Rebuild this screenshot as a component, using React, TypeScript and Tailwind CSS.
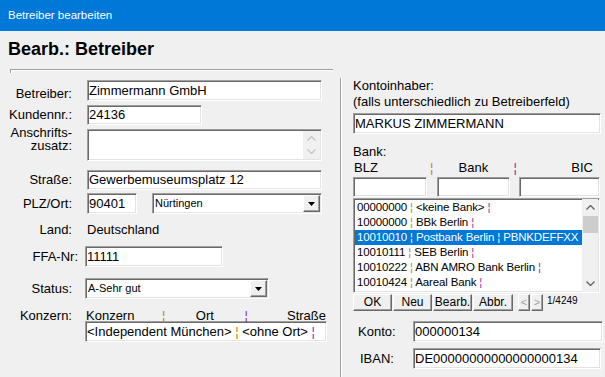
import React from 'react';

// Win32-style edit controls
const sunken =
  'bg-white border border-t-[#a0a0a0] border-l-[#a0a0a0] border-r-white border-b-white shadow-[inset_1px_1px_0_#696969,inset_-1px_-1px_0_#e3e3e3]';
const raised =
  'bg-[#f0f0f0] border border-t-white border-l-white border-r-[#696969] border-b-[#696969] shadow-[inset_-1px_-1px_0_#a0a0a0]';

const Gold = () => <span className="text-[#b58a00]">¦</span>;
const Purple = () => <span className="text-[#8b2f9a]">¦</span>;

const Chevron = ({ up, color }: { up?: boolean; color: string }) => (
  <svg width="9" height="5" viewBox="0 0 9 5">
    <path
      d={up ? 'M0.5 4.5 L4.5 0.5 L8.5 4.5' : 'M0.5 0.5 L4.5 4.5 L8.5 0.5'}
      fill="none"
      stroke={color}
      strokeWidth="1.3"
    />
  </svg>
);

const Field: React.FC<{ className?: string; children?: React.ReactNode }> = ({ className = '', children }) => (
  <div className={`${sunken} flex items-center pl-[1px] whitespace-pre overflow-hidden ${className}`}>
    <span>{children}</span>
  </div>
);

const Combo: React.FC<{ className?: string; value: string }> = ({ className = '', value }) => (
  <div className={`${sunken} flex p-[1px] ${className}`}>
    <div className="flex-1 flex items-center text-[11px] pl-[1px]">{value}</div>
    <div className={`${raised} w-[17px] flex items-center justify-center`}>
      <svg width="7" height="4" viewBox="0 0 7 4">
        <path d="M0 0h7L3.5 4z" fill="#000" />
      </svg>
    </div>
  </div>
);

const Label: React.FC<{ w?: string; className?: string; children: React.ReactNode }> = ({
  w = 'w-[72px]',
  className = '',
  children,
}) => <div className={`${w} shrink-0 text-right ${className}`}>{children}</div>;

const banks: [string, string, string][] = [
  ['00000000', '<keine Bank>', ''],
  ['10000000', 'BBk Berlin', ''],
  ['10010010', 'Postbank Berlin', 'PBNKDEFFXX'],
  ['10010111', 'SEB Berlin', ''],
  ['10010222', 'ABN AMRO Bank Berlin', ''],
  ['10010424', 'Aareal Bank', ''],
  ['10020000', 'Berliner Bank', ''],
];

const App: React.FC = () => {
  return (
    <div className="w-[605px] h-[377px] overflow-hidden bg-[#f0f0f0] font-['Liberation_Sans',Arial,sans-serif] text-[13px] text-black">
      <div className="h-[31px] bg-[#0078d7] flex items-center pl-[8px] text-[11.5px] text-white">
        Betreiber bearbeiten
      </div>
      <h1 className="pl-[8px] pt-[7px] pb-[9px] text-[18px] leading-[22px] font-bold">Bearb.: Betreiber</h1>

      <div className="flex">
        {/* left side */}
        <div className="w-[340px] shrink-0">
          <div className="ml-[10px] mr-[7px] h-[4px] border-t border-l border-[#a0a0a0] shadow-[inset_1px_1px_0_white]" />

          <div className="flex items-center mt-[7px] h-[21px]">
            <Label className="pt-[6px]">Betreiber:</Label>
            <Field className="ml-[15px] w-[235px] h-[21px]">Zimmermann GmbH</Field>
          </div>

          <div className="flex items-center mt-[4px] h-[20px]">
            <Label>Kundennr.:</Label>
            <Field className="ml-[15px] w-[115px] h-[20px]">24136</Field>
          </div>

          <div className="flex items-start">
            <Label className="leading-[13px] pt-[1px]">
              Anschrifts-
              <br />
              zusatz:
            </Label>
            <div className={`${sunken} ml-[15px] mt-[4px] w-[235px] h-[32px] flex justify-end p-[1px]`}>
              <div className="w-[17px] bg-[#f0f0f0] flex flex-col items-center justify-between py-[5px]">
                <Chevron up color="#c4c4c4" />
                <Chevron color="#c4c4c4" />
              </div>
            </div>
          </div>

          <div className="flex items-center mt-[9px] h-[20px]">
            <Label>Straße:</Label>
            <Field className="ml-[15px] w-[235px] h-[20px]">Gewerbemuseumsplatz 12</Field>
          </div>

          <div className="flex items-center mt-[3px] h-[21px]">
            <Label>PLZ/Ort:</Label>
            <Field className="ml-[15px] w-[50px] h-[21px]">90401</Field>
            <Combo className="ml-[15px] w-[170px] h-[21px]" value="Nürtingen" />
          </div>

          <div className="flex items-center mt-[6px] h-[20px]">
            <Label>Land:</Label>
            <div className="ml-[15px]">Deutschland</div>
          </div>

          <div className="flex items-center mt-[6px] h-[21px]">
            <Label w="w-[78px]">FFA-Nr:</Label>
            <Field className="ml-[7px] w-[138px] h-[21px]">11111</Field>
          </div>

          <div className="flex items-center mt-[11px] h-[21px]">
            <Label>Status:</Label>
            <Combo className="ml-[13px] w-[184px] h-[21px]" value="A-Sehr gut" />
          </div>

          <div className="flex items-start mt-[8px]">
            <Label className="leading-[14px] pt-[2px]">Konzern:</Label>
            <div className="ml-[13px] w-[242px]">
              <div className="flex h-[14px] leading-[14px] pt-[2px] box-content">
                <span className="w-[77px] pl-[1px]">Konzern</span>
                <Gold />
                <span className="w-[79px] text-center">Ort</span>
                <Purple />
                <span className="flex-1 text-right pr-[1px]">Straße</span>
              </div>
              <Field className="h-[21px] w-[242px] -mt-[2px]">
                {'<Independent München> '}
                <Gold />
                {' <ohne Ort> '}
                <Purple />
              </Field>
            </div>
          </div>
        </div>

        {/* right side */}
        <div className="mt-[9px] h-[299px] flex-1 border-l border-[#a0a0a0] shadow-[inset_1px_0_0_white] pl-[12px]">
          <div className="leading-[16px]">
            <div>Kontoinhaber:</div>
            <div>(falls unterschiedlich zu Betreiberfeld)</div>
          </div>
          <Field className="mt-[3px] w-[248px] h-[21px]">MARKUS ZIMMERMANN</Field>

          <div className="mt-[10px] leading-[16px]">Bank:</div>
          <div className="flex w-[247px] h-[16px] leading-[16px]">
            <span className="w-[77px] pl-[1px]">BLZ</span>
            <Gold />
            <span className="w-[80px] text-center">Bank</span>
            <Purple />
            <span className="flex-1 text-right pr-[7px]">BIC</span>
          </div>
          <div className="flex mt-[1px] h-[20px]">
            <Field className="w-[74px] h-[20px]" />
            <Field className="ml-[10px] w-[73px] h-[20px]" />
            <Field className="ml-[9px] w-[81px] h-[20px]" />
          </div>

          <div className={`${sunken} mt-[1px] w-[247px] h-[95px] flex overflow-hidden`}>
            <div className="flex-1 pt-[1px] pl-[1px] text-[11.5px] tracking-[-0.15px] leading-[15px] whitespace-nowrap overflow-hidden">
              {banks.map(([blz, name, bic]) => {
                const selected = blz === '10010010';
                return (
                  <div
                    key={blz}
                    className={`h-[15px] pl-[2px] ${selected ? 'bg-[#0078d7] text-white' : 'text-black'}`}
                  >
                    {blz} {selected ? '¦' : <Gold />} {name} {selected ? '¦' : <Purple />}
                    {bic && ` ${bic}`}
                  </div>
                );
              })}
            </div>
            <div className="w-[16px] mr-[1px] bg-[#f0f0f0] flex flex-col items-center">
              <div className="h-[17px] flex items-center">
                <Chevron up color="#606060" />
              </div>
              <div className="w-[15px] h-[17px] bg-[#cdcdcd]" />
              <div className="flex-1" />
              <div className="h-[17px] flex items-center">
                <Chevron color="#606060" />
              </div>
            </div>
          </div>

          <div className="flex items-start gap-[1px] mt-[1px] h-[17px]">
            {['OK', 'Neu', 'Bearb.', 'Abbr.'].map((b, i) => (
              <div
                key={b}
                className={`${raised} ${i === 3 ? 'w-[40px]' : 'w-[39px]'} h-[17px] text-center text-[12px] leading-[15px] whitespace-nowrap`}
              >
                {b}
              </div>
            ))}
            <div className={`${raised} ml-[4px] w-[12px] h-[17px] text-center text-[11px] leading-[15px] text-[#a0a0a0]`}>
              &lt;
            </div>
            <div className={`${raised} w-[12px] h-[17px] text-center text-[11px] leading-[15px] text-[#a0a0a0]`}>
              &gt;
            </div>
            <div className="ml-[3px] text-[10px] leading-[12px] pt-[1px]">1/4249</div>
          </div>

          <div className="flex items-center mt-[10px] h-[21px]">
            <div className="w-[60px] pl-[5px]">Konto:</div>
            <Field className="w-[190px] h-[21px]">000000134</Field>
          </div>
          <div className="flex items-center mt-[6px] h-[21px]">
            <div className="w-[60px] pl-[7px]">IBAN:</div>
            <Field className="w-[188px] h-[21px]">DE00000000000000000134</Field>
          </div>
        </div>
      </div>
    </div>
  );
};

export default App;
